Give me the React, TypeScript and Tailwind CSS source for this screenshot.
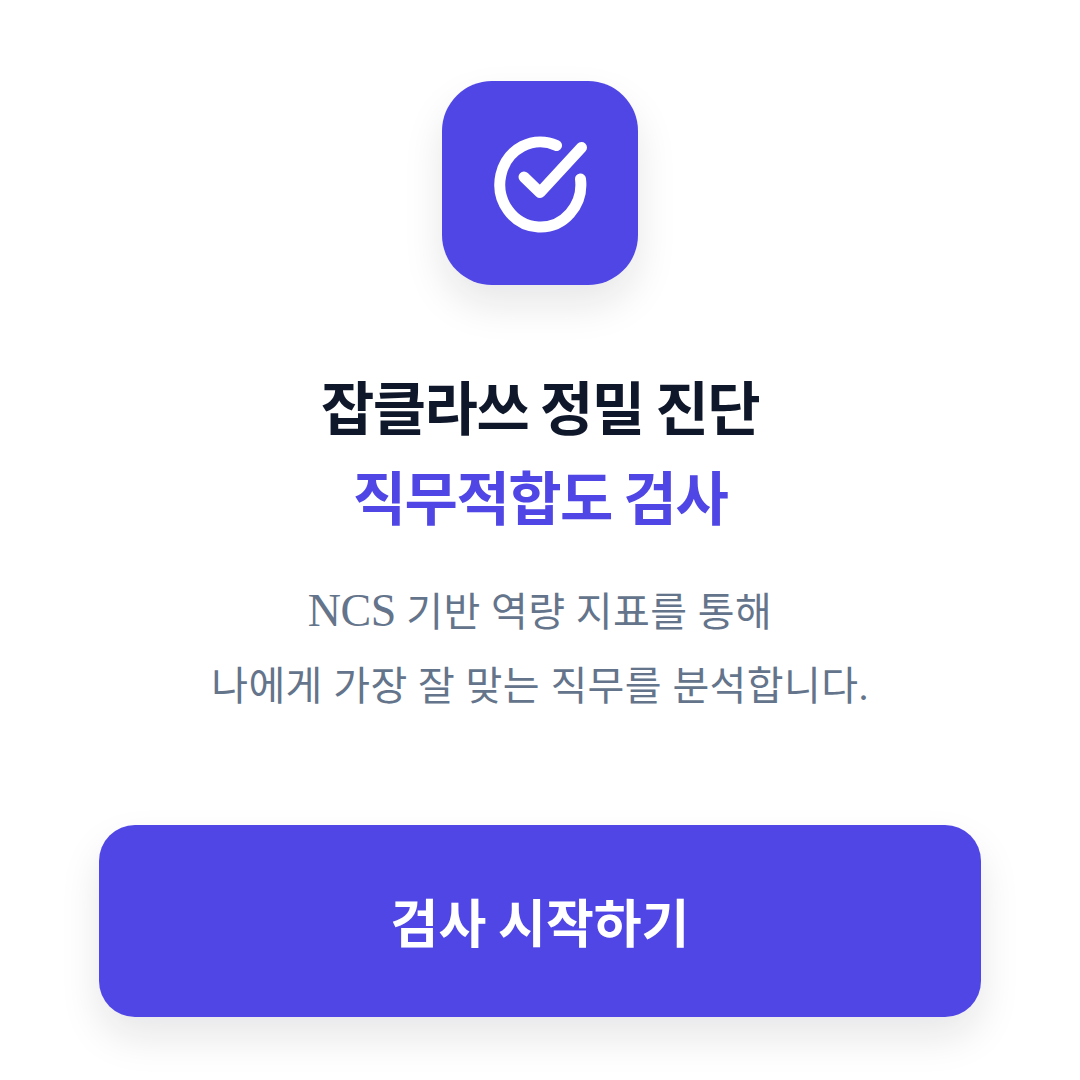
const CheckBadge = () => (
  <svg width="96" height="100" viewBox="0 0 96 100" fill="none" stroke="white" strokeLinecap="round" strokeLinejoin="round" strokeWidth="11">
    <path d="M64.5 12.5 A40.5 42.5 0 1 0 88.5 46" />
    <path d="M32 44 L48 59.5 L89.5 14.5" />
  </svg>
);

export default function App() {
  return (
    <div className="h-[1080px] w-[1080px] bg-white flex flex-col items-center font-['Noto_Sans_CJK_KR','Noto_Sans',sans-serif]">
      <div className="mt-[81px] w-[196px] h-[204px] rounded-[50px] bg-[#4f46e5] flex items-center justify-center shadow-[0_20px_40px_rgba(15,23,42,0.1)]">
        <CheckBadge />
      </div>
      <h1 className="mt-[84px] text-[58px] leading-[72px] font-bold tracking-[-1.5px] text-[#0f172a] text-center">
        잡클라쓰 정밀 진단
      </h1>
      <h2 className="mt-[18px] text-[58px] leading-[72px] font-bold tracking-[-1.5px] text-[#4f46e5] text-center">
        직무적합도 검사
      </h2>
      <p className="mt-[45px] text-[40px] leading-[74px] tracking-[0.4px] text-[#64748b] text-center font-['Liberation_Serif','Noto_Sans_CJK_KR',serif]">
        <span className="text-[46px] leading-[40px] font-light tracking-[-0.5px]">NCS</span> 기반 역량 지표를 통해
        <br />
        나에게 가장 잘 맞는 직무를 분석합니다.
      </p>
      <button className="mt-[101px] w-[882px] h-[192px] rounded-[36px] bg-[#4f46e5] text-white text-[52px] font-bold shadow-[0_20px_40px_rgba(15,23,42,0.1)]">
        검사 시작하기
      </button>
    </div>
  );
}
